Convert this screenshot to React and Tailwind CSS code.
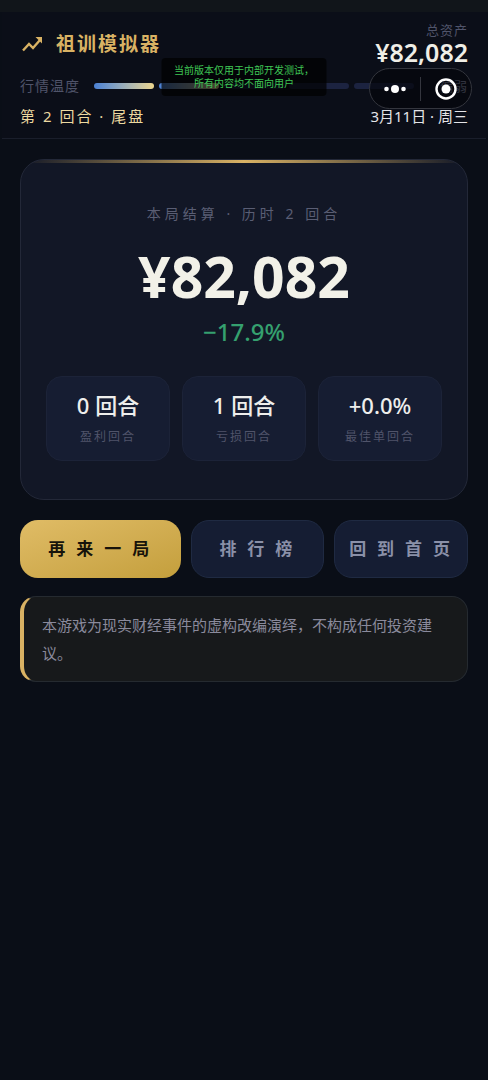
const segments = [true, true, false, false, false]

const stats = [
  { label: '盈利回合', value: '0 回合' },
  { label: '亏损回合', value: '1 回合' },
  { label: '最佳单回合', value: '+0.0%' },
]

function classNames(...classes) {
  return classes.filter(Boolean).join(' ')
}

function TrendIcon() {
  return (
    <svg viewBox="0 0 24 24" className="size-6 text-[#d9b264]" fill="none" stroke="currentColor" strokeWidth="2.4" aria-hidden="true">
      <path d="M3 18.5 9 12l4 4 7-8" />
      <path d="M15.5 5H22v6.5Z" fill="currentColor" stroke="none" />
    </svg>
  )
}

function Header() {
  return (
    <header className="mx-0.5 border-b border-[#1a1e2b] bg-[#0b0e18] px-[18px] pt-2 pb-3">
      <div className="flex h-12 items-center justify-between">
        <div className="flex items-center gap-3">
          <TrendIcon />
          <h1 className="text-[19px] leading-7 font-bold tracking-[2px] text-[#d9b264]">祖训模拟器</h1>
        </div>
        <div className="text-right">
          <div className="text-[13px] leading-4 tracking-[1px] text-[#50546a]">总资产</div>
          <div className="text-[25px] leading-7 font-semibold text-[#f0eee6]">¥82,082</div>
        </div>
      </div>
      <div className="mt-2 flex h-5 items-center gap-3.5">
        <span className="text-sm leading-5 tracking-[1px] text-[#50546a]">行情温度</span>
        <div className="flex flex-1 gap-[5px]">
          {segments.map((on, i) => (
            <div
              key={i}
              className={classNames('h-1.5 flex-1 rounded-full', on ? 'bg-linear-to-r from-[#4a80d4] to-[#ecd58c]' : 'bg-[#1c2340]')}
            />
          ))}
        </div>
        <span className="w-10 text-right text-[13px] leading-5 tracking-[1px] text-[#9a9eb4]">偏弱</span>
      </div>
      <div className="mt-2.5 flex items-center justify-between leading-5">
        <span className="text-[15px] tracking-[2px] text-[#ecd9a0]">第 2 回合 · 尾盘</span>
        <span className="text-[15px] text-[#e4e4e8]">3月11日 · 周三</span>
      </div>
    </header>
  )
}

function Stat({ label, value }) {
  return (
    <div className="flex flex-col-reverse rounded-2xl border border-[#1c2338] bg-[#161d32] pt-3.5 pb-[13px] text-center">
      <dt className="mt-2 text-xs leading-5 tracking-[2px] text-[#50546a]">{label}</dt>
      <dd className="text-[22px] leading-7 font-medium text-[#eeeeec]">{value}</dd>
    </div>
  )
}

export default function App() {
  return (
    <div className="relative min-h-screen border-t-12 border-[#11151a] bg-[#0a0e17] font-['Noto_Sans','Noto_Sans_CJK_SC',sans-serif]">
      <Header />

      {/* Test build notice */}
      <div className="absolute top-[46px] left-1/2 w-[165px] -translate-x-1/2 rounded-sm bg-black/70 py-1.5 text-center text-[10px] leading-[13px] text-[#3fc655]">
        当前版本仅用于内部开发测试，
        <br />
        所有内容均不面向用户
      </div>

      {/* Mini program capsule */}
      <div className="absolute top-14 right-4 flex h-[41px] w-[103px] items-center rounded-full border border-[#34363e] bg-[#04060c]/70">
        <button type="button" aria-label="更多" className="flex flex-1 justify-center">
          <svg viewBox="0 0 24 10" className="h-2.5 w-6" fill="#fff">
            <circle cx="3.5" cy="5" r="2.3" />
            <circle cx="12" cy="5" r="4" />
            <circle cx="20.5" cy="5" r="2.3" />
          </svg>
        </button>
        <div className="h-6 w-px bg-[#34363e]" />
        <button type="button" aria-label="关闭" className="flex flex-1 justify-center">
          <svg viewBox="0 0 24 24" className="size-6" fill="none">
            <circle cx="12" cy="12" r="9.5" stroke="#fff" strokeWidth="2.4" />
            <circle cx="12" cy="12" r="4.5" fill="#fff" />
          </svg>
        </button>
      </div>

      <main className="px-5 pt-5">
        <section className="relative overflow-hidden rounded-3xl border border-[#232838] bg-[#121726] px-[25px] pt-11 pb-[38px] text-center">
          <div className="absolute inset-x-0 top-0 h-[3px] bg-linear-to-r from-transparent via-[#d9b264] to-transparent" />
          <p className="text-sm leading-5 tracking-[4px] text-[#5a5e74]">本局结算 · 历时 2 回合</p>
          <p className="mt-5 text-[57px] leading-[64px] font-bold text-[#f2f1e8]">¥82,082</p>
          <p className="mt-2 text-2xl leading-8 font-medium text-[#35a06f]">−17.9%</p>
          <dl className="mt-7 grid grid-cols-3 gap-3">
            {stats.map((item) => (
              <Stat key={item.label} label={item.label} value={item.value} />
            ))}
          </dl>
        </section>

        <div className="mt-5 grid grid-cols-[6fr_5fr_5fr] gap-2.5 text-[17px] leading-6 font-bold whitespace-nowrap">
          <button type="button" className="rounded-[18px] bg-linear-to-br from-[#e0bc66] to-[#c49f3c] py-[17px] pl-2 tracking-[11px] text-[#17130a]">
            再来一局
          </button>
          <button type="button" className="rounded-[18px] border border-[#1f2a42] bg-[#151d33] py-4 pl-2 tracking-[11px] text-[#8a90a8]">
            排行榜
          </button>
          <button type="button" className="rounded-[18px] border border-[#1f2a42] bg-[#151d33] py-4 pl-2 tracking-[11px] text-[#8a90a8]">
            回到首页
          </button>
        </div>

        <p className="mt-[18px] rounded-2xl border border-l-4 border-[#252a30] border-l-[#d9b264] bg-[#17191b] py-3.5 pr-5 pl-[18px] text-[15px] leading-7 text-[#8a8a9c]">
          本游戏为现实财经事件的虚构改编演绎，不构成任何投资建议。
        </p>
      </main>
    </div>
  )
}
